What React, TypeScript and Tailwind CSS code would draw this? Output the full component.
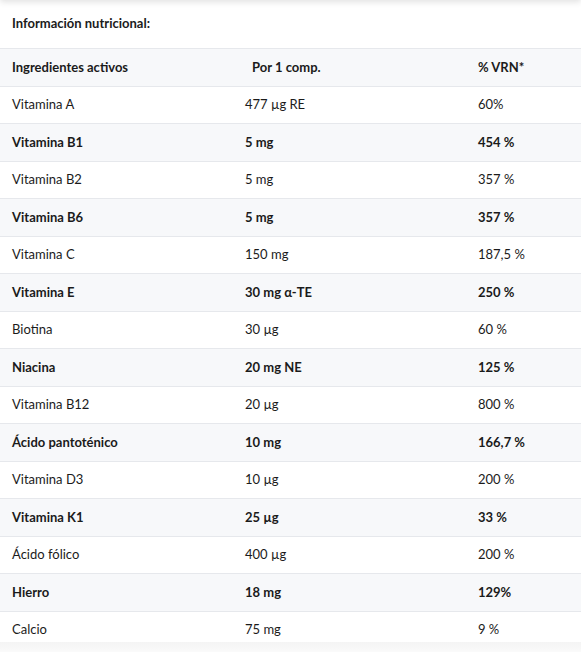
import React from "react";

type Row = { name: string; amount: string; vrn: string; bold?: boolean };

const rows: Row[] = [
  { name: "Vitamina A", amount: "477 µg RE", vrn: "60%" },
  { name: "Vitamina B1", amount: "5 mg", vrn: "454 %", bold: true },
  { name: "Vitamina B2", amount: "5 mg", vrn: "357 %" },
  { name: "Vitamina B6", amount: "5 mg", vrn: "357 %", bold: true },
  { name: "Vitamina C", amount: "150 mg", vrn: "187,5 %" },
  { name: "Vitamina E", amount: "30 mg α-TE", vrn: "250 %", bold: true },
  { name: "Biotina", amount: "30 µg", vrn: "60 %" },
  { name: "Niacina", amount: "20 mg NE", vrn: "125 %", bold: true },
  { name: "Vitamina B12", amount: "20 µg", vrn: "800 %" },
  { name: "Ácido pantoténico", amount: "10 mg", vrn: "166,7 %", bold: true },
  { name: "Vitamina D3", amount: "10 µg", vrn: "200 %" },
  { name: "Vitamina K1", amount: "25 µg", vrn: "33 %", bold: true },
  { name: "Ácido fólico", amount: "400 µg", vrn: "200 %" },
  { name: "Hierro", amount: "18 mg", vrn: "129%", bold: true },
  { name: "Calcio", amount: "75 mg", vrn: "9 %" },
];

export default function App() {
  return (
    <div
      className="relative w-[581px] h-[652px] overflow-hidden bg-white text-[13px] text-[#1b1b1b]"
      style={{ fontFamily: "Lato, 'Noto Sans', sans-serif" }}
    >
      <div className="absolute top-[-10px] left-0 right-0 h-[10px] shadow-[0_2px_6px_rgba(0,0,0,0.12)]" />
      <div className="h-[49px] flex items-center px-3 font-bold border-b border-[#e6e8ec]">
        Información nutricional:
      </div>
      <div className="grid grid-cols-[233px_233px_1fr] h-[37.5px] items-center bg-[#f7f8fa] font-bold border-b border-[#e6e8ec]">
        <div className="pl-3">Ingredientes activos</div>
        <div className="pl-[19px]">Por 1 comp.</div>
        <div className="pl-3">% VRN*</div>
      </div>
      {rows.map((r, i) => (
        <div
          key={i}
          className={`grid grid-cols-[233px_233px_1fr] h-[37.5px] items-center border-b border-[#e6e8ec] ${
            r.bold ? "bg-[#f7f8fa] font-bold" : "bg-white"
          }`}
        >
          <div className="pl-3">{r.name}</div>
          <div className="pl-3">{r.amount}</div>
          <div className="pl-3">{r.vrn}</div>
        </div>
      ))}
      <div className="absolute left-0 right-0 top-[642px] h-[10px] bg-gradient-to-b from-[#f4f4f4] to-[#fafafa]" />
    </div>
  );
}
